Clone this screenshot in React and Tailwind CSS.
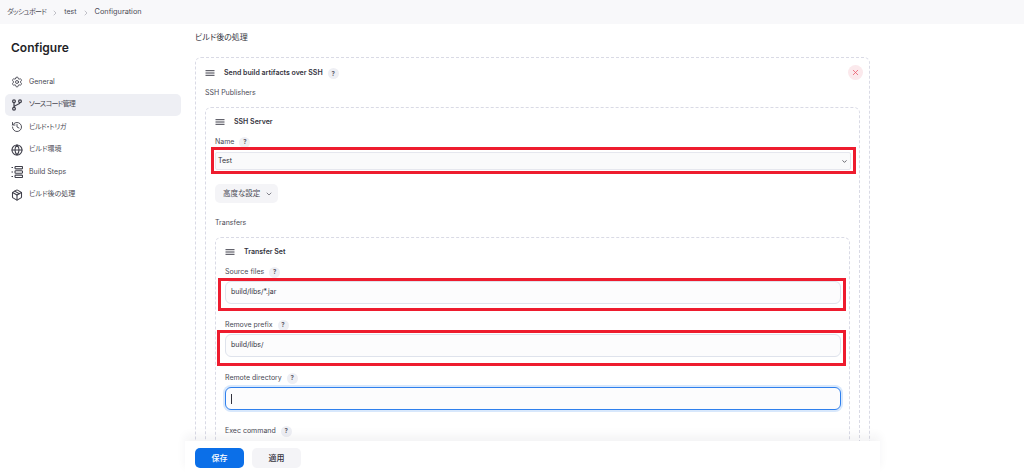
import React from "react";
import { Settings, History, Globe, Package, ChevronDown, X, ChevronRight } from "lucide-react";

const jp = "[font-feature-settings:'palt']";

const Handle = () => (
  <svg width="10" height="6" viewBox="0 0 10 6" className="shrink-0 text-[#3f3f4a]">
    <path d="M0.5 .7H9.5M0.5 3H9.5M0.5 5.3H9.5" stroke="currentColor" strokeWidth="1" />
  </svg>
);

const Help = () => (
  <span className="ml-[5px] flex h-[11px] w-[11px] items-center justify-center rounded-full bg-[#eeeff4] text-[6px] font-bold text-[#5c5c68]">?</span>
);

const Label = ({ children }) => (
  <div className="flex h-[12px] items-center text-[7px] leading-[12px] text-[#4a4a55]">
    {children}
    <Help />
  </div>
);

const BuildSteps = () => (
  <svg width="12" height="12" viewBox="0 0 12 12" fill="none" stroke="currentColor" strokeWidth="1.1">
    <path d="M.5 1.5h1.5M.5 6h1.5M.5 10.5h1.5" />
    <rect x="4" y=".5" width="7.5" height="2.4" rx=".8" />
    <rect x="4" y="4.8" width="7.5" height="2.4" rx=".8" />
    <rect x="4" y="9.1" width="7.5" height="2.4" rx=".8" />
  </svg>
);

const Branch = () => (
  <svg width="12" height="12" viewBox="0 0 12 12" fill="none" stroke="currentColor" strokeWidth="1.2">
    <circle cx="3" cy="2.2" r="1.4" />
    <circle cx="3" cy="9.8" r="1.4" />
    <circle cx="9" cy="2.2" r="1.4" />
    <path d="M3 3.6V8.4M9 3.6C9 6 3.5 5.5 3 8" />
  </svg>
);

const nav = [
  [<Settings size={12} strokeWidth={1.7} />, "General", ""],
  [<Branch />, "ソースコード管理", "bg-[#eeeff4] tracking-[-0.7px]"],
  [<History size={12} strokeWidth={1.8} />, "ビルド・トリガ", "tracking-[-0.4px]"],
  [<Globe size={12} strokeWidth={2.2} />, "ビルド環境", ""],
  [<BuildSteps />, "Build Steps", ""],
  [<Package size={12} strokeWidth={2.2} />, "ビルド後の処理", ""],
];

const Marked = ({ className }) => (
  <div className={`pointer-events-none absolute border-[3px] border-[#ee1c2e] ${className}`} />
);

const Input = ({ children, focus, mark }) => (
  <div className="relative mt-[3px]">
    <div
      className={`flex h-[23px] items-center rounded-[6px] bg-[#fcfcfd] px-[5px] text-[7px] text-[#33333d] ${
        focus ? "border border-[#2f80ed] shadow-[0_0_0_2px_#d8e8fc]" : "border border-[#dfe3ec]"
      }`}
    >
      {children}
    </div>
    {mark}
  </div>
);

export default function App() {
  return (
    <div className="flex h-[473px] w-[1024px] flex-col overflow-hidden bg-white font-['Inter','Noto_Sans_CJK_JP',sans-serif] text-[#33333d]">
      <header className="flex h-[24px] shrink-0 items-center bg-[#f8f8fa] pl-[7px] pt-px text-[7px] text-[#4a4a55]">
        <span className={`${jp} tracking-[-0.6px]`}>ダッシュボード</span>
        <ChevronRight size={8} className="mx-[5px] text-[#a5a5af]" />
        <span>test</span>
        <ChevronRight size={8} className="mx-[5px] text-[#a5a5af]" />
        <span className="text-[7.3px]">Configuration</span>
      </header>
      <div className="flex min-h-0 flex-1">
        <aside className="w-[185px] shrink-0 pl-[5px] pr-[4px]">
          <h1 className="mt-[14px] pl-[6px] text-[12px] font-semibold leading-[20px] text-[#1f1f28]">Configure</h1>
          <nav className="mt-[13px] flex flex-col gap-[0.5px]">
            {nav.map(([icon, label, extra]) => (
              <div
                key={label}
                className={`flex h-[22px] items-center gap-[6px] rounded-[5px] pl-[6px] text-[7px] text-[#4a4a55] ${jp} ${extra}`}
              >
                <span className="flex w-[12px] justify-center text-[#3f3f4a]">{icon}</span>
                {label}
              </div>
            ))}
          </nav>
        </aside>
        <main className="relative w-[695px] shrink-0 px-[10px]">
          <h2 className={`mt-[6px] h-[14px] text-[8px] leading-[14px] text-[#33333d] ${jp}`}>ビルド後の処理</h2>
          <section className="relative mt-[13px] rounded-[6px] border border-dashed border-[#d9dae5] px-[9px] pb-[20px] pt-[9px]">
            <button className="absolute right-[6px] top-[7px] flex h-[15px] w-[15px] items-center justify-center rounded-full bg-[#fbe9ec] text-[#ea5467]">
              <X size={9} strokeWidth={2} />
            </button>
            <div className="flex h-[12px] items-center">
              <Handle />
              <span className="ml-[9px] text-[7px] font-semibold text-[#33333d]">Send build artifacts over SSH</span>
              <Help />
            </div>
            <div className="mt-[8px] h-[12px] text-[7px] leading-[12px] text-[#4a4a55]">SSH Publishers</div>
            <div className="mt-[8px] rounded-[6px] border border-dashed border-[#d9dae5] px-[9px] pb-[20px] pt-[8px]">
              <div className="flex h-[12px] items-center">
                <Handle />
                <span className="ml-[9px] text-[7px] font-semibold text-[#33333d]">SSH Server</span>
              </div>
              <div className="mt-[8px]"><Label>Name</Label></div>
              <div className="relative -mr-px mt-[4px] flex h-[18px] items-center justify-between rounded-[2px] border border-[#e6e7ee] bg-[#fafafb] pl-[2px] pr-[2px] text-[7px] text-[#33333d]">
                <span>Test</span>
                <ChevronDown size={7} strokeWidth={2.5} className="text-[#33333d]" />
                <Marked className="-bottom-[5px] -left-[5px] -right-[6px] -top-[6px]" />
              </div>
              <button className={`mt-[14px] flex h-[19px] w-[63px] items-center gap-[5px] rounded-[5px] bg-[#f4f4f7] pl-[8px] text-[7.5px] text-[#4a4a55] ${jp}`}>
                高度な設定
                <ChevronDown size={8} strokeWidth={2} />
              </button>
              <div className="mt-[14px] h-[12px] text-[7px] leading-[12px] text-[#4a4a55]">Transfers</div>
              <div className="mt-[8px] rounded-[6px] border border-dashed border-[#d9dae5] pb-[20px] pl-[9px] pr-[8px] pt-[8px]">
                <div className="flex h-[12px] items-center">
                  <Handle />
                  <span className="ml-[9px] text-[7px] font-semibold text-[#33333d]">Transfer Set</span>
                </div>
                <div className="mt-[8px]"><Label>Source files</Label></div>
                <Input mark={<Marked className="-bottom-[7px] -left-[7px] -right-[5px] -top-[3px]" />}>build/libs/*.jar</Input>
                <div className="mt-[15px]"><Label>Remove prefix</Label></div>
                <Input mark={<Marked className="-bottom-[9px] -left-[8px] -right-[5px] -top-[4px]" />}>build/libs/</Input>
                <div className="mt-[15px]"><Label>Remote directory</Label></div>
                <Input focus>
                  <span className="h-[10px] w-px bg-[#33333d]" />
                </Input>
                <div className="mt-[15px]"><Label>Exec command</Label></div>
                <div className="pt-[2px]"><Input /></div>
              </div>
            </div>
          </section>
          <footer className="absolute bottom-0 left-0 right-0 flex h-[32px] items-start gap-[8px] bg-white pl-[10px] pt-[7px] shadow-[0_-6px_10px_rgba(30,30,50,0.05)]">
            <button className={`flex h-[20px] w-[49px] items-center justify-center rounded-[5px] bg-[#0b6fe8] text-[8px] font-medium text-white ${jp}`}>保存</button>
            <button className={`flex h-[20px] w-[49px] items-center justify-center rounded-[5px] bg-[#f4f4f7] text-[8px] font-medium text-[#33333d] ${jp}`}>適用</button>
          </footer>
        </main>
      </div>
    </div>
  );
}
